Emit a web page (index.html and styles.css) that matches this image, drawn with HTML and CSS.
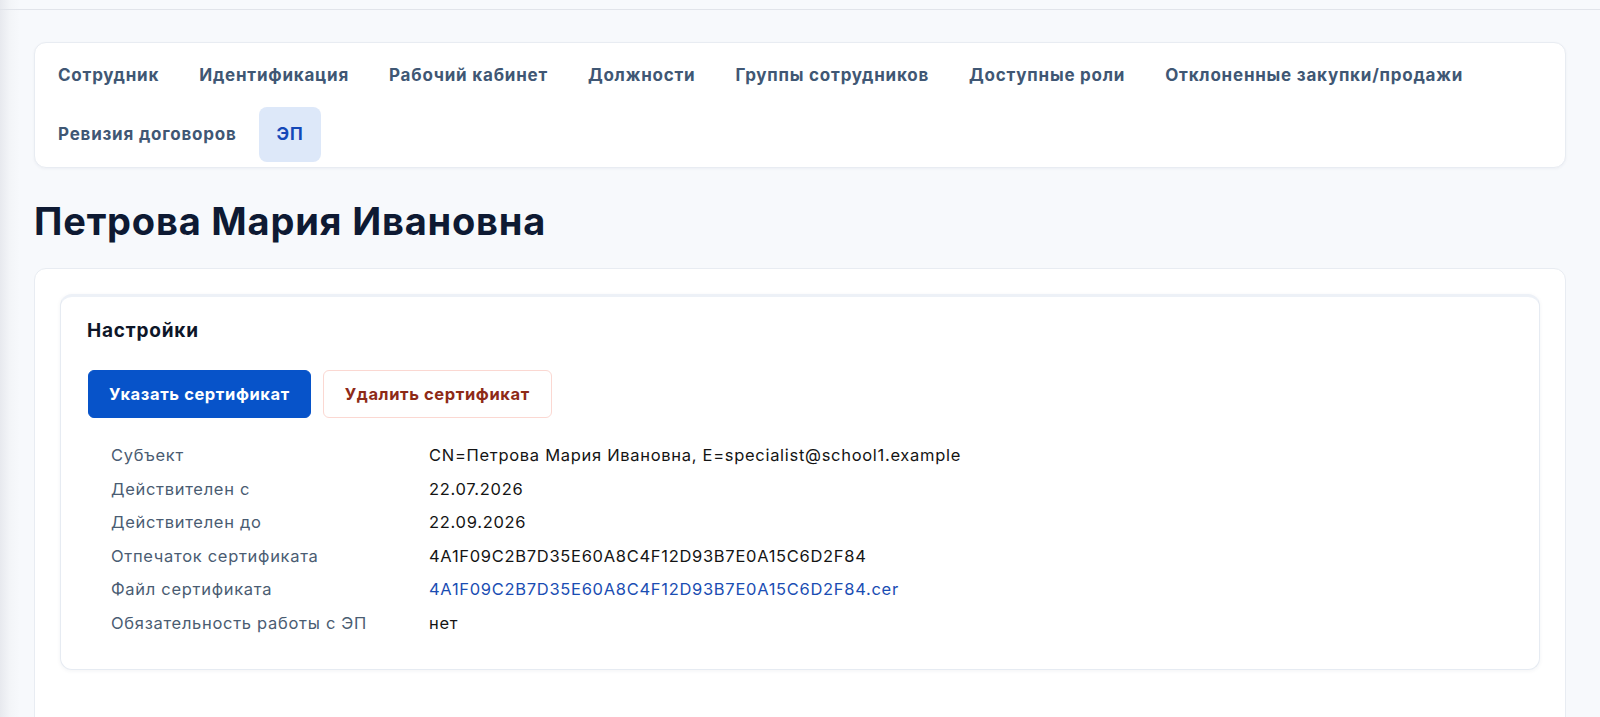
FILE: index.html
```html
<!DOCTYPE html>
<html lang="ru">
<head>
<meta charset="utf-8">
<title>Петрова Мария Ивановна — ЭП</title>
<link rel="stylesheet" href="styles.css">
</head>
<body>
<div class="topbar"></div>
<main class="page">
  <nav class="tabs">
    <a class="tab">Сотрудник</a>
    <a class="tab">Идентификация</a>
    <a class="tab">Рабочий кабинет</a>
    <a class="tab">Должности</a>
    <a class="tab">Группы сотрудников</a>
    <a class="tab">Доступные роли</a>
    <a class="tab">Отклоненные закупки/продажи</a>
    <a class="tab">Ревизия договоров</a>
    <a class="tab active">ЭП</a>
  </nav>

  <h1 class="title">Петрова Мария Ивановна</h1>

  <section class="panel">
    <div class="card">
      <div class="card-head">Настройки</div>
      <div class="card-body">
        <div class="actions">
          <button class="btn btn-primary">Указать сертификат</button>
          <button class="btn btn-danger">Удалить сертификат</button>
        </div>
        <dl class="info">
          <dt>Субъект</dt>
          <dd>CN=Петрова Мария Ивановна, E=specialist@school1.example</dd>
          <dt>Действителен с</dt>
          <dd>22.07.2026</dd>
          <dt>Действителен до</dt>
          <dd>22.09.2026</dd>
          <dt>Отпечаток сертификата</dt>
          <dd>4A1F09C2B7D35E60A8C4F12D93B7E0A15C6D2F84</dd>
          <dt>Файл сертификата</dt>
          <dd><a class="link">4A1F09C2B7D35E60A8C4F12D93B7E0A15C6D2F84.cer</a></dd>
          <dt>Обязательность работы с ЭП</dt>
          <dd>нет</dd>
        </dl>
      </div>
    </div>
  </section>
</main>
</body>
</html>
```

FILE: styles.css
```css
* { box-sizing: border-box; }

html, body { height: 100%; }

body {
  margin: 0;
  background: linear-gradient(to right, #e7e9ee 0, #f3f5f8 10px, #f7f9fc 20px) #f7f9fc;
  font-family: Inter, "Noto Sans", sans-serif;
  color: #151a22;
  overflow: hidden;
}

.topbar {
  height: 10px;
  border-bottom: 1px solid #e1e4ea;
  background: transparent;
}

.page {
  padding: 32px 34px 0 34px;
}

/* Tabs */
.tabs {
  display: flex;
  flex-wrap: wrap;
  gap: 4px;
  padding: 5px;
  background: #fff;
  border: 1px solid #e8ecf2;
  border-radius: 12px;
  box-shadow: 0 1px 3px rgba(30, 50, 90, 0.05);
}

.tab {
  display: block;
  height: 55px;
  line-height: 55px;
  padding: 0 18px;
  border-radius: 8px;
  font-weight: 700;
  font-size: 17px;
  letter-spacing: 0.78px;
  color: #405774;
  cursor: pointer;
}

.tab.active {
  background: #dde8f9;
  color: #1448b8;
}

/* Title */
.title {
  margin: 30px 0 24px 0;
  font-size: 38px;
  line-height: 46px;
  font-weight: 700;
  letter-spacing: 0.8px;
  color: #0e1a33;
}

/* Panel */
.panel {
  background: #fff;
  border: 1px solid #e8ecf2;
  border-radius: 12px;
  padding: 25px 25px 58px 25px;
}

.card {
  border: 1px solid #e6ebf2;
  border-top: 3px solid #edf1f7;
  border-radius: 12px;
  box-shadow: 0 1px 4px rgba(30, 50, 90, 0.06);
  background: #fff;
}

.card-head {
  padding: 22px 26px 17px 26px;
  font-size: 19px;
  line-height: 24px;
  font-weight: 700;
  letter-spacing: 0.8px;
  color: #0e1628;
}

.card-body {
  padding: 10px 27px 29px 27px;
}

.actions {
  display: flex;
  gap: 12px;
  align-items: center;
}

.btn {
  font-family: inherit;
  font-size: 16.5px;
  font-weight: 700;
  letter-spacing: 0.6px;
  height: 48px;
  padding: 0 20px;
  border-radius: 6px;
  cursor: pointer;
}

.btn-primary {
  background: #0753c9;
  border: 1px solid #0753c9;
  color: #fff;
}

.btn-danger {
  background: #fff;
  border: 1px solid #fbd8d2;
  color: #8e2a17;
  padding: 0 21px;
}

/* Info list */
.info {
  display: grid;
  grid-template-columns: 318px 1fr;
  margin: 21px 0 0 23px;
  font-size: 16.5px;
  letter-spacing: 0.7px;
  line-height: 33.5px;
}

.info dt {
  color: #4a5c72;
}

.info dd {
  margin: 0;
  color: #141414;
}

.link {
  color: #1a4db3;
  text-decoration: none;
  cursor: pointer;
}
```
